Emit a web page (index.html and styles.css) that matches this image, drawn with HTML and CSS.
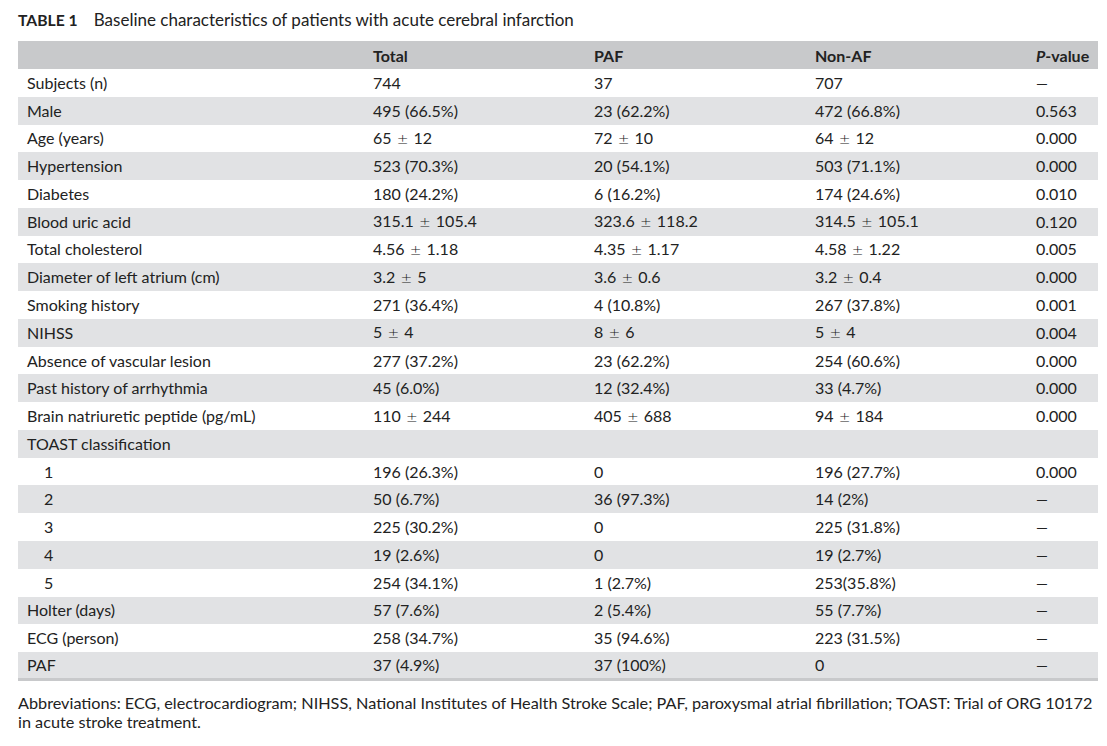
FILE: index.html
```html
<!DOCTYPE html>
<html lang="en">
<head>
    <meta charset="UTF-8">
    <meta name="viewport" content="width=device-width, initial-scale=1.0">
    <title>Table 1 - Baseline characteristics</title>
    <link rel="stylesheet" href="styles.css">
</head>
<body>
    <div class="table-wrap">
        <div class="table-caption">
            <span class="table-label">TABLE 1</span>
            <span class="table-title">Baseline characteristics of patients with acute cerebral infarction</span>
        </div>

        <table class="data-table">
            <thead>
                <tr>
                    <th></th>
                    <th>Total</th>
                    <th>PAF</th>
                    <th>Non-AF</th>
                    <th><i>P</i>-value</th>
                </tr>
            </thead>
            <tbody>
                <tr><td>Subjects (n)</td><td>744</td><td>37</td><td>707</td><td class="dash">—</td></tr>
                <tr><td>Male</td><td>495 (66.5%)</td><td>23 (62.2%)</td><td>472 (66.8%)</td><td>0.563</td></tr>
                <tr><td>Age (years)</td><td>65 <span class="pm">±</span> 12</td><td>72 <span class="pm">±</span> 10</td><td>64 <span class="pm">±</span> 12</td><td>0.000</td></tr>
                <tr><td>Hypertension</td><td>523 (70.3%)</td><td>20 (54.1%)</td><td>503 (71.1%)</td><td>0.000</td></tr>
                <tr><td>Diabetes</td><td>180 (24.2%)</td><td>6 (16.2%)</td><td>174 (24.6%)</td><td>0.010</td></tr>
                <tr><td>Blood uric acid</td><td>315.1 <span class="pm">±</span> 105.4</td><td>323.6 <span class="pm">±</span> 118.2</td><td>314.5 <span class="pm">±</span> 105.1</td><td>0.120</td></tr>
                <tr><td>Total cholesterol</td><td>4.56 <span class="pm">±</span> 1.18</td><td>4.35 <span class="pm">±</span> 1.17</td><td>4.58 <span class="pm">±</span> 1.22</td><td>0.005</td></tr>
                <tr><td>Diameter of left atrium (cm)</td><td>3.2 <span class="pm">±</span> 5</td><td>3.6 <span class="pm">±</span> 0.6</td><td>3.2 <span class="pm">±</span> 0.4</td><td>0.000</td></tr>
                <tr><td>Smoking history</td><td>271 (36.4%)</td><td>4 (10.8%)</td><td>267 (37.8%)</td><td>0.001</td></tr>
                <tr><td>NIHSS</td><td>5 <span class="pm">±</span> 4</td><td>8 <span class="pm">±</span> 6</td><td>5 <span class="pm">±</span> 4</td><td>0.004</td></tr>
                <tr><td>Absence of vascular lesion</td><td>277 (37.2%)</td><td>23 (62.2%)</td><td>254 (60.6%)</td><td>0.000</td></tr>
                <tr><td>Past history of arrhythmia</td><td>45 (6.0%)</td><td>12 (32.4%)</td><td>33 (4.7%)</td><td>0.000</td></tr>
                <tr><td>Brain natriuretic peptide (pg/mL)</td><td>110 <span class="pm">±</span> 244</td><td>405 <span class="pm">±</span> 688</td><td>94 <span class="pm">±</span> 184</td><td>0.000</td></tr>
                <tr><td>TOAST classification</td><td></td><td></td><td></td><td></td></tr>
                <tr><td class="sub">1</td><td>196 (26.3%)</td><td>0</td><td>196 (27.7%)</td><td>0.000</td></tr>
                <tr><td class="sub">2</td><td>50 (6.7%)</td><td>36 (97.3%)</td><td>14 (2%)</td><td class="dash">—</td></tr>
                <tr><td class="sub">3</td><td>225 (30.2%)</td><td>0</td><td>225 (31.8%)</td><td class="dash">—</td></tr>
                <tr><td class="sub">4</td><td>19 (2.6%)</td><td>0</td><td>19 (2.7%)</td><td class="dash">—</td></tr>
                <tr><td class="sub">5</td><td>254 (34.1%)</td><td>1 (2.7%)</td><td>253(35.8%)</td><td class="dash">—</td></tr>
                <tr><td>Holter (days)</td><td>57 (7.6%)</td><td>2 (5.4%)</td><td>55 (7.7%)</td><td class="dash">—</td></tr>
                <tr><td>ECG (person)</td><td>258 (34.7%)</td><td>35 (94.6%)</td><td>223 (31.5%)</td><td class="dash">—</td></tr>
                <tr><td>PAF</td><td>37 (4.9%)</td><td>37 (100%)</td><td>0</td><td class="dash">—</td></tr>
            </tbody>
        </table>

        <p class="table-note">Abbreviations: ECG, electrocardiogram; NIHSS, National Institutes of Health Stroke Scale; PAF, paroxysmal atrial fibrillation; TOAST: Trial of ORG 10172 in acute stroke treatment.</p>
    </div>
</body>
</html>
```

FILE: styles.css
```css
body {
    margin: 0;
    padding: 0;
    background: #ffffff;
    color: #222222;
    font-family: Lato, "Liberation Sans", sans-serif;
    font-size: 16px;
}

.table-wrap {
    width: 1080px;
    padding: 10px 0 0 18px;
}

.table-caption {
    height: 20px;
    line-height: 20px;
    margin-bottom: 11px;
}

.table-label {
    font-size: 15.7px;
    font-weight: bold;
    margin-right: 12px;
}

.table-title {
    font-size: 17px;
}

.data-table {
    width: 100%;
    border-collapse: collapse;
    table-layout: fixed;
    border-bottom: 3px solid #c8c9cb;
}

.data-table th,
.data-table td {
    height: 27.77px;
    padding: 0 9px;
    text-align: left;
    vertical-align: middle;
    line-height: 18px;
    box-sizing: border-box;
    white-space: nowrap;
}

.data-table th {
    height: 28px;
    font-weight: bold;
    background: #c8c9cb;
    padding-top: 2px;
}

.data-table th:nth-child(1) { width: 346px; }
.data-table th:nth-child(2) { width: 221px; }
.data-table th:nth-child(3) { width: 221px; }
.data-table th:nth-child(4) { width: 221px; }

.data-table tbody tr:nth-child(even) {
    background: #e1e2e4;
}

.data-table td.sub {
    padding-left: 26px;
}

.data-table td.dash {
    font-size: 15px;
}

.pm {
    font-family: "DejaVu Sans", sans-serif;
    font-size: 14px;
    font-weight: 300;
    margin: 0 1px;
}

.table-note {
    width: 1085px;
    margin: 12px 0 0 0;
    font-size: 16.24px;
    line-height: 19px;
}
```
